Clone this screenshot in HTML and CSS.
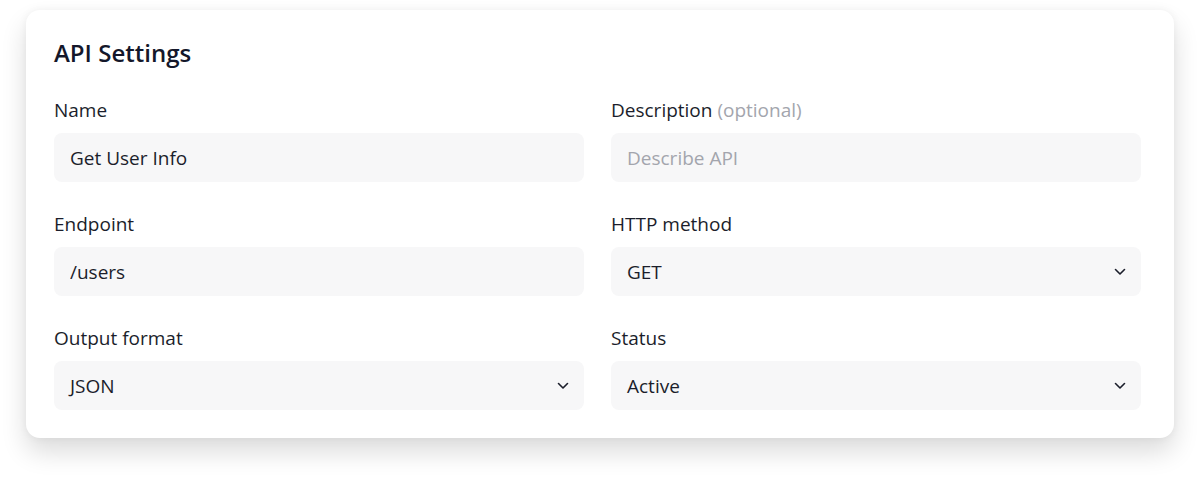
FILE: index.html
```html
<!DOCTYPE html>
<html lang="en">
<head>
  <meta charset="UTF-8" />
  <title>API Settings</title>
  <link rel="stylesheet" href="styles.css">
</head>
<body>

  <div class="card">
    <h2>API Settings</h2>

    <form class="settings-grid">
      <div class="field">
        <label for="name">Name</label>
        <input type="text" id="name" value="Get User Info">
      </div>

      <div class="field">
        <label for="desc">Description <span class="muted">(optional)</span></label>
        <input type="text" id="desc" placeholder="Describe API">
      </div>

      <div class="field">
        <label for="endpoint">Endpoint</label>
        <input type="text" id="endpoint" value="/users">
      </div>

      <div class="field">
        <label for="method">HTTP method</label>
        <div class="select">
          <span>GET</span>
          <svg width="12" height="8" viewBox="0 0 12 8"><path d="M1.5 1.5 6 6l4.5-4.5" fill="none" stroke="#1b1e2b" stroke-width="1.6" stroke-linecap="round" stroke-linejoin="round"/></svg>
        </div>
      </div>

      <div class="field">
        <label for="format">Output format</label>
        <div class="select">
          <span>JSON</span>
          <svg width="12" height="8" viewBox="0 0 12 8"><path d="M1.5 1.5 6 6l4.5-4.5" fill="none" stroke="#1b1e2b" stroke-width="1.6" stroke-linecap="round" stroke-linejoin="round"/></svg>
        </div>
      </div>

      <div class="field">
        <label for="status">Status</label>
        <div class="select">
          <span>Active</span>
          <svg width="12" height="8" viewBox="0 0 12 8"><path d="M1.5 1.5 6 6l4.5-4.5" fill="none" stroke="#1b1e2b" stroke-width="1.6" stroke-linecap="round" stroke-linejoin="round"/></svg>
        </div>
      </div>
    </form>
  </div>

</body>
</html>
```

FILE: styles.css
```css
html {
  background: #fff;
}

body {
  font-family: 'Open Sans', sans-serif;
  margin: 0;
  padding: 10px 26px 42px;
  min-height: 428px;
  box-sizing: border-box;
  color: #1b1e2b;
}

.card {
  background: #fff;
  border-radius: 14px;
  padding: 28px 33px 28px 28px;
  box-shadow: 0 14px 26px rgba(0, 0, 0, 0.14), 0 0 8px rgba(0, 0, 0, 0.05);
}

h2 {
  margin: 0 0 30px;
  font-size: 24px;
  line-height: 30px;
  font-weight: 600;
  color: #14172a;
}

.settings-grid {
  display: grid;
  grid-template-columns: 1fr 1fr;
  column-gap: 27px;
  row-gap: 30px;
}

label {
  display: block;
  font-size: 19px;
  line-height: 24px;
  margin-bottom: 11px;
}

.muted {
  color: #a3a5ad;
}

input,
.select {
  box-sizing: border-box;
  width: 100%;
  height: 49px;
  padding: 0 16px;
  border: none;
  border-radius: 8px;
  background: #f7f7f8;
  font-family: inherit;
  font-size: 19px;
  color: #1b1e2b;
  outline: none;
}

input::placeholder {
  color: #a3a5ad;
}

.select {
  display: flex;
  align-items: center;
  justify-content: space-between;
  padding-right: 15px;
}
```
